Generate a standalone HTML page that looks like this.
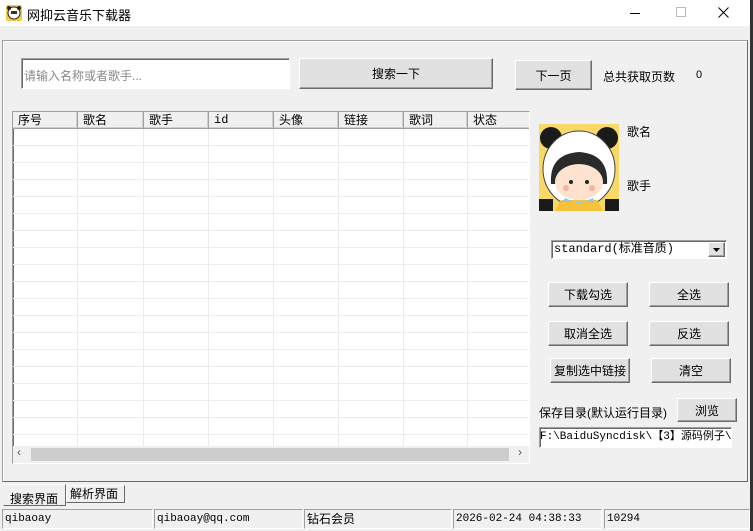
<!DOCTYPE html>
<html><head><meta charset="utf-8"><style>
*{margin:0;padding:0;box-sizing:border-box}
body{width:753px;height:531px;background:#f0f0f0;position:relative;overflow:hidden;font-family:"Liberation Sans","Noto Sans CJK SC","WenQuanYi Zen Hei",sans-serif;font-size:12px;color:#000}
.a{position:absolute}
.btn{position:absolute;background:#e1e1e1;border:1px solid;border-color:#fff #6b6b6b #6b6b6b #fff;box-shadow:inset -1px -1px 0 #a0a0a0,inset 1px 1px 0 #e3e3e3;display:flex;align-items:center;justify-content:center;font-size:12px}
.mono{font-family:"Liberation Mono","Noto Sans CJK SC",monospace;font-size:11px}
.sunk{border:1px solid;border-color:#a0a0a0 #fff #fff #a0a0a0;box-shadow:inset 1px 1px 0 #696969}
.th{position:absolute;top:0;height:17px;border-right:1px solid #a0a0a0;border-bottom:1px solid #a0a0a0;padding-left:5px;line-height:17px;background:#f0f0f0;box-shadow:inset -1px -1px 0 #d0d0d0;font-size:12px}
.vl{position:absolute;top:17px;width:1px;height:317px;background:#ececec}
.sb{position:absolute;top:509px;height:20px;border:1px solid;border-color:#a0a0a0 #fff #fff #a0a0a0;font-family:"Liberation Mono","Noto Sans CJK SC",monospace;font-size:11px;line-height:18px;padding-left:2px}
</style></head><body>
<div class="a" style="left:0;top:0;width:753px;height:26px;background:#fff"></div>
<svg class="a" style="left:6px;top:5px" width="16" height="16" viewBox="0 0 16 16"><rect width="16" height="16" rx="2" fill="#f7c948"/><circle cx="8" cy="8" r="6" fill="#fff" stroke="#222"/><circle cx="3" cy="3" r="2" fill="#222"/><circle cx="13" cy="3" r="2" fill="#222"/><rect x="5" y="6" width="6" height="3" fill="#333"/></svg>
<div class="a" style="left:27px;top:5px;font-size:13px">网抑云音乐下载器</div>
<div class="a" style="left:630px;top:13px;width:10px;height:1px;background:#000"></div>
<div class="a" style="left:676px;top:7px;width:10px;height:10px;border:1px solid #bbb"></div>
<svg class="a" style="left:718px;top:7px" width="11" height="11" viewBox="0 0 11 11"><path d="M0.5 0.5 L10.5 10.5 M10.5 0.5 L0.5 10.5" stroke="#000" stroke-width="1"/></svg>
<div class="a" style="left:750px;top:0;width:3px;height:531px;background:#333"></div>
<div class="a" style="left:2px;top:40px;width:746px;height:442px;border:1px solid;border-color:#a0a0a0 #696969 #696969 #a0a0a0;box-shadow:inset 1px 1px 0 #fff"></div>
<div class="a sunk" style="left:21px;top:58px;width:269px;height:31px;background:#fff;color:#888;padding:8px 0 0 2px">请输入名称或者歌手...</div>
<div class="btn" style="left:299px;top:58px;width:194px;height:31px">搜索一下</div>
<div class="btn" style="left:515px;top:60px;width:77px;height:30px">下一页</div>
<div class="a" style="left:603px;top:68px">总共获取页数</div>
<div class="a" style="left:696px;top:69px;font-size:11px">0</div>
<div class="a sunk" style="left:12px;top:111px;width:518px;height:353px;background:#fff;overflow:hidden">
<div class="a" style="left:0;top:17px;width:518px;height:317px;background:repeating-linear-gradient(to bottom,transparent 0,transparent 16px,#ececec 16px,#ececec 17px)"></div>
<div class="vl" style="left:64px"></div><div class="vl" style="left:130px"></div><div class="vl" style="left:195px"></div><div class="vl" style="left:260px"></div><div class="vl" style="left:325px"></div><div class="vl" style="left:390px"></div><div class="vl" style="left:454px"></div>
<div class="th" style="left:0;width:65px">序号</div>
<div class="th" style="left:65px;width:66px">歌名</div>
<div class="th" style="left:131px;width:65px">歌手</div>
<div class="th mono" style="left:196px;width:65px">id</div>
<div class="th" style="left:261px;width:65px">头像</div>
<div class="th" style="left:326px;width:65px">链接</div>
<div class="th" style="left:391px;width:64px">歌词</div>
<div class="th" style="left:455px;width:63px">状态</div>
<div class="a" style="left:0;top:334px;width:518px;height:17px;background:#f0f0f0"></div>
<div class="a" style="left:18px;top:336px;width:478px;height:13px;background:#cdcdcd"></div>
<div class="a" style="left:4px;top:333px;font-size:12px;color:#555">‹</div>
<div class="a" style="left:505px;top:333px;font-size:12px;color:#555">›</div>
</div>
<svg class="a" style="left:539px;top:124px" width="80" height="87" viewBox="0 0 80 87"><rect width="80" height="87" fill="#f8d866"/><circle cx="12" cy="14" r="11" fill="#1a1a1a"/><circle cx="68" cy="14" r="11" fill="#1a1a1a"/><ellipse cx="40" cy="45" rx="36" ry="38" fill="#fff" stroke="#444"/><path d="M12 60 Q10 30 40 28 Q70 30 68 60 Z" fill="#2a2a2a"/><ellipse cx="40" cy="58" rx="24" ry="18" fill="#fde3cf"/><circle cx="32" cy="58" r="2" fill="#222"/><circle cx="48" cy="58" r="2" fill="#222"/><circle cx="27" cy="64" r="3" fill="#f7b3a0"/><circle cx="53" cy="64" r="3" fill="#f7b3a0"/><path d="M22 76 L58 76 L64 87 L16 87 Z" fill="#f6c23a"/><path d="M26 74 L40 80 L54 74 L56 78 L24 78 Z" fill="#8cc8ec"/><rect x="0" y="75" width="14" height="12" fill="#1a1a1a"/><rect x="66" y="75" width="14" height="12" fill="#1a1a1a"/></svg>
<div class="a" style="left:627px;top:123px">歌名</div>
<div class="a" style="left:627px;top:177px">歌手</div>
<div class="a sunk" style="left:551px;top:240px;width:176px;height:19px;background:#fff;font-family:'Liberation Mono','Noto Sans CJK SC',monospace;font-size:12px;line-height:16px;padding-left:2px">standard(标准音质)</div>
<div class="btn" style="left:708px;top:242px;width:17px;height:15px"><svg width="7" height="4" viewBox="0 0 7 4"><path d="M0 0 L7 0 L3.5 4 Z" fill="#000"/></svg></div>
<div class="btn" style="left:548px;top:282px;width:80px;height:25px">下载勾选</div>
<div class="btn" style="left:649px;top:282px;width:80px;height:25px">全选</div>
<div class="btn" style="left:548px;top:321px;width:80px;height:25px">取消全选</div>
<div class="btn" style="left:649px;top:321px;width:80px;height:25px">反选</div>
<div class="btn" style="left:550px;top:358px;width:80px;height:25px">复制选中链接</div>
<div class="btn" style="left:651px;top:358px;width:80px;height:25px">清空</div>
<div class="a" style="left:539px;top:404px;font-size:12px">保存目录(默认运行目录)</div>
<div class="btn" style="left:677px;top:398px;width:60px;height:24px">浏览</div>
<div class="a sunk" style="left:539px;top:427px;width:193px;height:21px;background:#fff;overflow:hidden;white-space:nowrap;font-family:'Liberation Mono','Noto Sans CJK SC',monospace;font-size:11px;line-height:19px">F:\BaiduSyncdisk\【3】源码例子\源</div>
<div class="a" style="left:3px;top:484px;width:63px;height:22px;border:1px solid;border-color:#fff #696969 #696969 #f0f0f0;padding:5px 0 0 6px">搜索界面</div>
<div class="a" style="left:66px;top:485px;width:59px;height:18px;border:1px solid;border-color:#fff #696969 #696969 #fff;padding:0 0 0 3px;line-height:16px">解析界面</div>
<div class="sb" style="left:2px;width:151px">qibaoay</div>
<div class="sb" style="left:154px;width:149px">qibaoay@qq.com</div>
<div class="sb" style="left:304px;width:148px;font-family:'Liberation Sans','Noto Sans CJK SC',sans-serif;font-size:12px">钻石会员</div>
<div class="sb" style="left:453px;width:149px">2026-02-24 04:38:33</div>
<div class="sb" style="left:604px;width:146px">10294</div>
</body></html>
